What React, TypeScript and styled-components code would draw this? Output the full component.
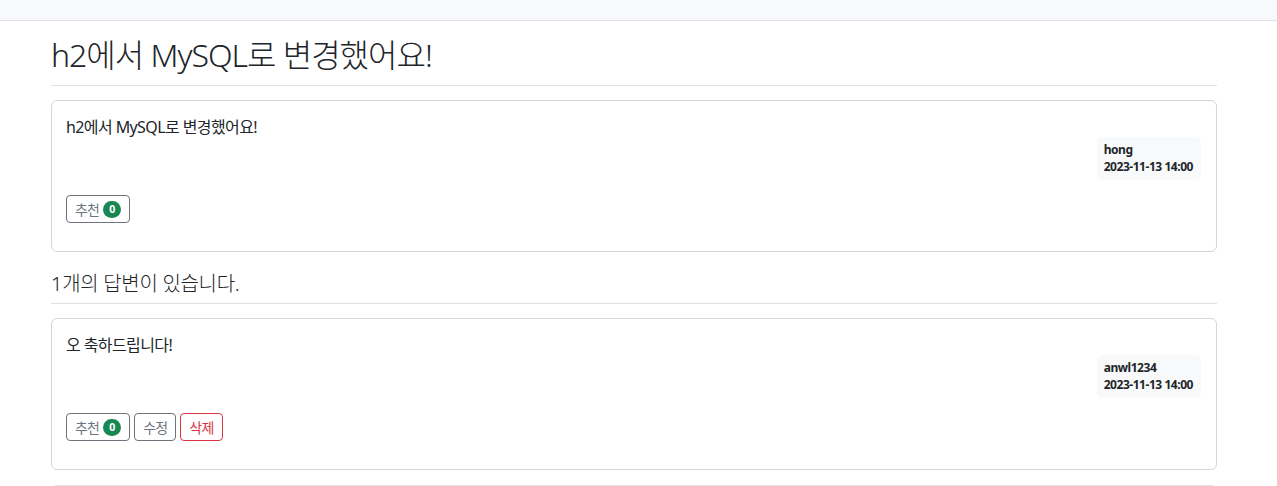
import styled, { createGlobalStyle } from "styled-components";

type Post = {
  content: string;
  author: string;
  createDate: string;
  voter: number;
  editable?: boolean;
};

const question: Post = {
  content: "h2에서 MySQL로 변경했어요!",
  author: "hong",
  createDate: "2023-11-13 14:00",
  voter: 0,
};

const answers: Post[] = [
  {
    content: "오 축하드립니다!",
    author: "anwl1234",
    createDate: "2023-11-13 14:00",
    voter: 0,
    editable: true,
  },
];

function PostCard({ content, author, createDate, voter, editable }: Post) {
  return (
    <StyledCard>
      <StyledCardText>{content}</StyledCardText>
      <StyledAuthorRow>
        <StyledAuthorBadge>
          <div>{author}</div>
          <div>{createDate}</div>
        </StyledAuthorBadge>
      </StyledAuthorRow>
      <StyledButtonRow>
        <StyledButton>
          추천 <StyledCount>{voter}</StyledCount>
        </StyledButton>
        {editable && <StyledButton>수정</StyledButton>}
        {editable && <StyledButton $danger>삭제</StyledButton>}
      </StyledButtonRow>
    </StyledCard>
  );
}

export default function App(): JSX.Element {
  return (
    <>
      <GlobalStyle />
      <StyledNav />
      <StyledContainer>
        <StyledTitle>{question.content}</StyledTitle>
        <PostCard {...question} />
        <StyledAnswerHeader>{answers.length}개의 답변이 있습니다.</StyledAnswerHeader>
        {answers.map((answer) => (
          <PostCard key={answer.author} {...answer} />
        ))}
        <StyledAnswerForm />
      </StyledContainer>
    </>
  );
}

const GlobalStyle = createGlobalStyle`
  body {
    margin: 0;
    background: #fff;
    color: #212529;
    font-family: "Noto Sans", "Noto Sans CJK KR", sans-serif;
  }
`;

const StyledNav = styled.nav`
  height: 20px;
  background-color: #f8f9fa;
  border-bottom: 1px solid #dee2e6;
`;

const StyledContainer = styled.main`
  width: 1166px;
  margin-left: 51px;
  padding-top: 15px;
`;

const StyledTitle = styled.h2`
  margin: 0;
  font-size: 32px;
  font-weight: 300;
  line-height: 38px;
  letter-spacing: -1px;
  padding-bottom: 11px;
  border-bottom: 1px solid #dee2e6;
`;

const StyledAnswerHeader = styled.h5`
  margin: 16px 0 0;
  font-size: 20px;
  font-weight: 300;
  line-height: 24px;
  letter-spacing: -0.3px;
  padding: 4px 0 7px;
  border-bottom: 1px solid #dee2e6;
`;

const StyledCard = styled.section`
  margin-top: 14px;
  border: 1px solid #d6d6d6;
  border-radius: 6px;
  padding: 16px 15px 28px 14px;
`;

const StyledCardText = styled.div`
  font-size: 16px;
  line-height: 20px;
  letter-spacing: -0.6px;
  white-space: pre-line;
`;

const StyledAuthorRow = styled.div`
  display: flex;
  justify-content: flex-end;
`;

const StyledAuthorBadge = styled.div`
  background-color: #f8f9fa;
  color: #212529;
  border-radius: 6px;
  padding: 7px 8px 7px 7px;
  font-size: 12px;
  font-weight: 700;
  line-height: 12px;
  letter-spacing: -0.45px;
  div:first-child {
    margin-bottom: 5px;
  }
`;

const StyledButtonRow = styled.div`
  display: flex;
  gap: 4px;
  margin-top: 15px;
`;

const StyledButton = styled.button<{ $danger?: boolean }>`
  display: inline-flex;
  align-items: center;
  gap: 4px;
  height: 28px;
  padding: 0 8px;
  background: #fff;
  border: 1px solid ${(p) => (p.$danger ? "#dc3545" : "#6c757d")};
  color: ${(p) => (p.$danger ? "#dc3545" : "#6c757d")};
  border-radius: 4px;
  font-family: inherit;
  font-size: 14px;
  letter-spacing: -0.8px;
`;

const StyledCount = styled.span`
  display: inline-flex;
  align-items: center;
  justify-content: center;
  min-width: 18px;
  height: 17px;
  padding: 0 5px;
  box-sizing: border-box;
  border-radius: 9px;
  background-color: #198754;
  color: #fff;
  font-size: 10.5px;
  font-weight: 700;
  letter-spacing: 0;
`;

const StyledAnswerForm = styled.div`
  margin-top: 15px;
  height: 120px;
  border: 1px solid #dee2e6;
  border-radius: 6px;
`;
